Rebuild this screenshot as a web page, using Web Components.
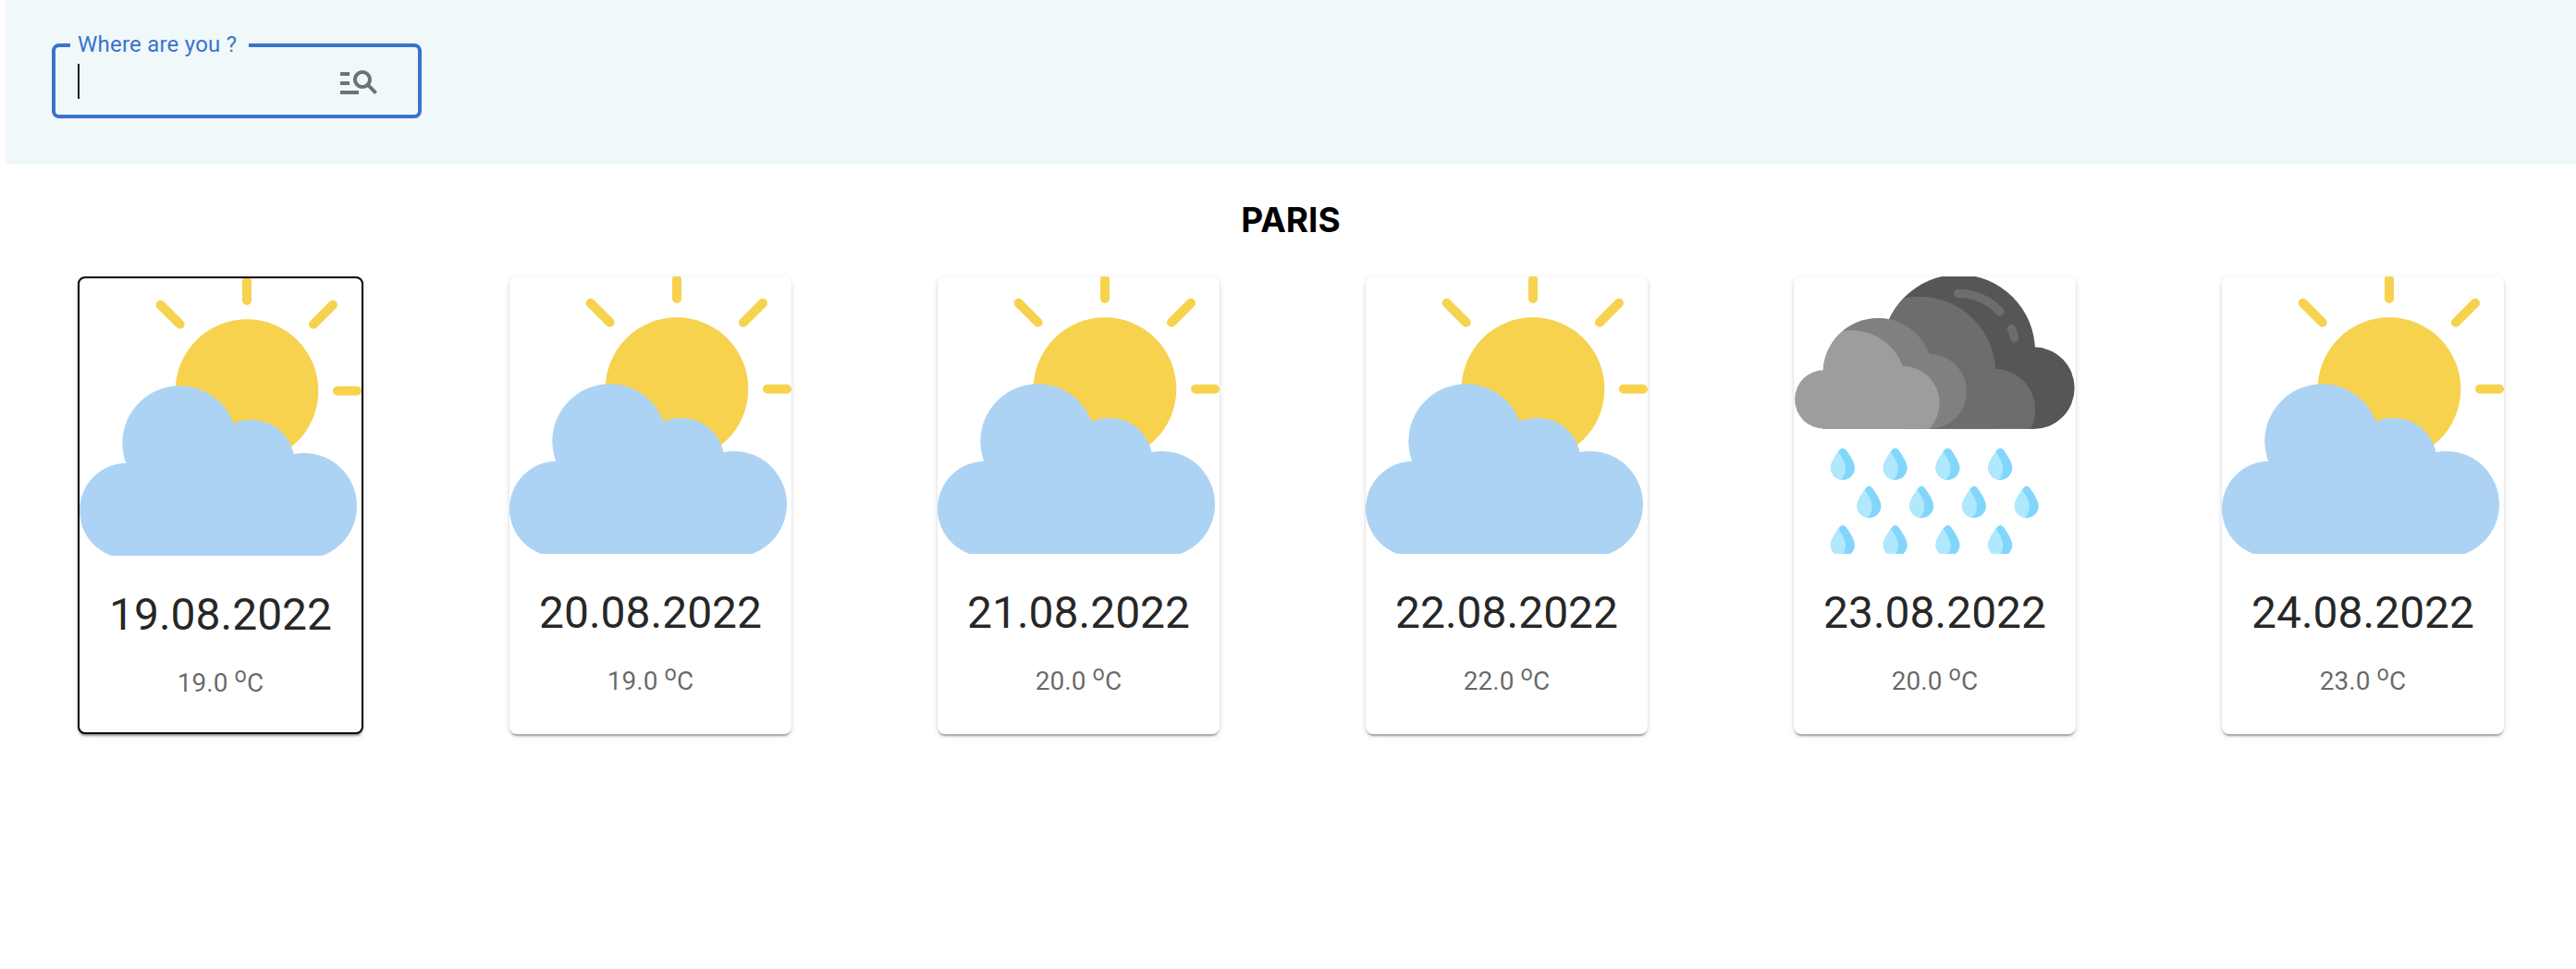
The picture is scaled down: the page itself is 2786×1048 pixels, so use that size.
<!DOCTYPE html>
<html lang="en">
<head>
<meta charset="utf-8">
<title>Weather</title>
<style>
body { margin: 0; background: #fff; font-family: Roboto, "Liberation Sans", sans-serif; }
</style>
</head>
<body>
<weather-app></weather-app>
<script>
const define = (name, html) => {
  const tpl = document.createElement('template');
  tpl.innerHTML = html;
  customElements.define(name, class extends HTMLElement {
    constructor() {
      super();
      this.attachShadow({ mode: 'open' }).appendChild(tpl.content.cloneNode(true));
    }
  });
};

define('search-field', `
<style>
:host { display: block; width: 400px; }
fieldset { box-sizing: border-box; height: 93px; margin: 0; min-width: 0; padding: 0 0 0 16px; border: 4px solid #3973cd; border-radius: 8px; }
legend { box-sizing: border-box; width: 193px; padding: 0 0 2px 8px; font-size: 24px; line-height: 26px; letter-spacing: .225px; color: #3973cd; white-space: nowrap; }
.row { display: flex; align-items: flex-start; justify-content: space-between; padding: 1px 40px 0 8px; }
.caret { width: 2px; height: 38px; margin-top: 5px; background: rgba(0,0,0,.87); }
svg { display: block; width: 48px; height: 48px; fill: rgba(0,0,0,.54); }
</style>
<fieldset>
  <legend><slot></slot></legend>
  <div class="row">
    <div class="caret"></div>
    <svg viewBox="0 0 24 24"><path d="M7 9H2V7h5v2zm0 3H2v2h5v-2zm13.59 7-3.83-3.83c-.8.52-1.74.83-2.76.83-2.76 0-5-2.24-5-5s2.24-5 5-5 5 2.24 5 5c0 1.02-.31 1.96-.83 2.75L22 17.59 20.59 19zM17 11c0-1.65-1.35-3-3-3s-3 1.35-3 3 1.35 3 3 3 3-1.35 3-3zM2 19h10v-2H2v2z"/></svg>
  </div>
</fieldset>`);

define('sun-cloud', `
<style>:host, svg { display: block; width: 305px; height: 300px; }</style>
<svg viewBox="63 57 915 900">
  <circle cx="606" cy="422" r="232" fill="#f7d24f"/>
  <g stroke="#f7d24f" stroke-width="30" stroke-linecap="round">
    <path d="M606 66V129M326 143L389 206M885 143L822 206M900 422.500H963"/>
  </g>
  <g fill="#acd3f4">
    <circle cx="388" cy="592" r="186"/><circle cx="620" cy="657" r="141"/>
    <circle cx="791" cy="796" r="172"/><circle cx="218" cy="811" r="155"/>
    <path d="M218 656L388 600H620L791 700V957H218z"/>
  </g>
</svg>`);

const drop = (x, y) => `<g transform="translate(${x} ${y})">
  <path fill="#82d6fc" d="M-10 5Q0-5 10 5C22 21 39 48 39 64A39 39 0 0 1-39 64C-39 46-24 26-10 5z"/>
  <path fill="#b0e9fd" d="M-14 12C-26 31-39 48-39 64C-39 82-25 98-7 102C4 94 9 80 9 64C9 46-3 31-14 12z"/></g>`;
const drops = [0, 1, 2, 3].map(i =>
  drop(219 + i * 170.3, 614) + drop(304.5 + i * 170.3, 737.500) + drop(219 + i * 170.3, 864)).join('');

define('rain-cloud', `
<style>:host, svg { display: block; width: 305px; height: 300px; }</style>
<svg viewBox="60 57 915 900">
  <defs>
    <clipPath id="back"><circle cx="595" cy="299" r="248"/><path d="M348 299H595L838 286L971 400V551.500H348z"/></clipPath>
    <clipPath id="front"><circle cx="333" cy="370" r="178"/><path d="M155 370L333 300H503L621 430V551.500H155z"/></clipPath>
  </defs>
  <g fill="#565656"><circle cx="595" cy="299" r="248"/><circle cx="838" cy="419" r="133"/><path d="M400 299H838V551.500H400z"/></g>
  <g fill="#6d6d6d" clip-path="url(#back)"><circle cx="467" cy="370" r="248"/><circle cx="711" cy="489" r="132.500"/><path d="M348 370H711V552H348z"/></g>
  <path d="M593 112A187 187 0 0 1 729 171M766 226Q773 240 776 256" fill="none" stroke="#6d6d6d" stroke-width="28" stroke-linecap="round"/>
  <g fill="#82807e"><circle cx="333" cy="370" r="178"/><circle cx="500" cy="430" r="121.500"/><path d="M158 370H500V551.500H158z"/></g>
  <g fill="#9e9d9b"><circle cx="158" cy="456" r="95"/>
    <g clip-path="url(#front)"><circle cx="247" cy="410" r="178"/><circle cx="412" cy="468" r="121"/><path d="M155 400H412V552H155z"/></g></g>
  ${drops}
</svg>`);

define('day-card', `
<style>
:host { display: block; flex: none; box-sizing: border-box; width: 305px; border-radius: 8px; overflow: hidden; background: #fff;
  box-shadow: 0 4px 2px -2px rgba(0,0,0,.2), 0 2px 2px 0 rgba(0,0,0,.14), 0 2px 6px 0 rgba(0,0,0,.12); }
:host([selected]) { width: 309px; border: 2px solid #000; }
.content { padding: 32px 0; text-align: center; white-space: nowrap; }
.date { font-size: 48px; line-height: 64px; color: rgba(0,0,0,.87); margin-bottom: 13px; }
.temp { font-size: 28px; line-height: 40px; height: 50px; letter-spacing: .05px; color: rgba(0,0,0,.6); }
</style>
<slot name="picture"></slot>
<div class="content">
  <div class="date"><slot name="date"></slot></div>
  <div class="temp"><slot></slot> <sup>o</sup>C</div>
</div>`);

const days = [
  ['19.08.2022', '19.0', 'sun-cloud'], ['20.08.2022', '19.0', 'sun-cloud'],
  ['21.08.2022', '20.0', 'sun-cloud'], ['22.08.2022', '22.0', 'sun-cloud'],
  ['23.08.2022', '20.0', 'rain-cloud'], ['24.08.2022', '23.0', 'sun-cloud']];

define('weather-app', `
<style>
:host { display: block; box-sizing: border-box; min-height: 100vh; padding-left: 6px; }
header { box-sizing: border-box; height: 178px; padding: 35px 50px; background: #f0f8fa; }
h2 { margin: 38px 0 0; height: 83px; font: 700 37px/44px Inter, sans-serif; text-align: center; color: #000; }
main { display: flex; gap: 158px; padding: 0 78px; align-items: stretch; }
</style>
<header><search-field>Where are you ?</search-field></header>
<h2>PARIS</h2>
<main>${days.map(([d, t, pic], i) =>
  `<day-card${i ? '' : ' selected'}><${pic} slot="picture"></${pic}><span slot="date">${d}</span>${t}</day-card>`).join('')}</main>`);
</script>
</body>
</html>
